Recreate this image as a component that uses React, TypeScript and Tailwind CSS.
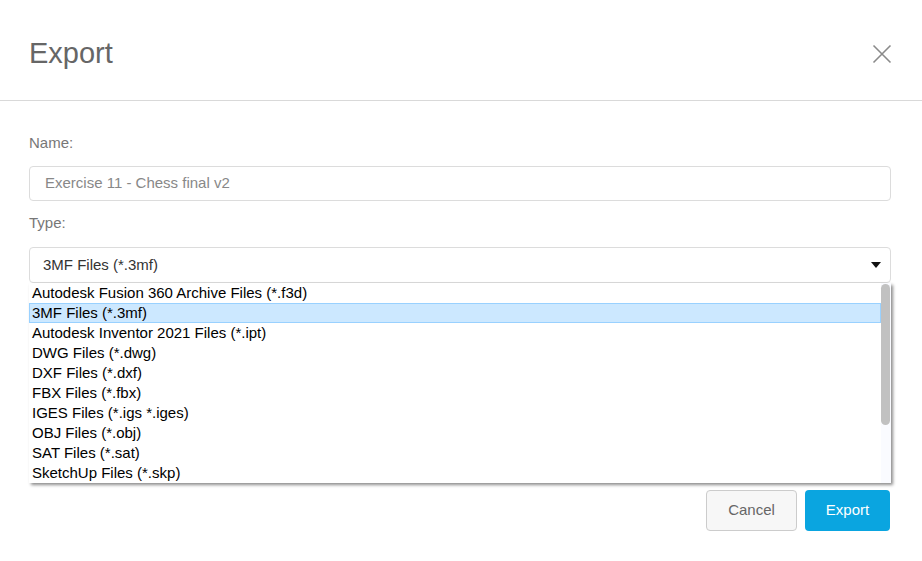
import React from 'react';

const types = [
  'Autodesk Fusion 360 Archive Files (*.f3d)',
  '3MF Files (*.3mf)',
  'Autodesk Inventor 2021 Files (*.ipt)',
  'DWG Files (*.dwg)',
  'DXF Files (*.dxf)',
  'FBX Files (*.fbx)',
  'IGES Files (*.igs *.iges)',
  'OBJ Files (*.obj)',
  'SAT Files (*.sat)',
  'SketchUp Files (*.skp)',
];

export default function App() {
  return (
    <div className="w-[922px] h-[561px] bg-white font-['Liberation_Sans',Arial,sans-serif] overflow-hidden">
      {/* header */}
      <div className="h-[101px] border-b border-[#d9d9d9] flex items-start justify-between pl-[29px] pr-[30px]">
        <h1 className="mt-[35px] text-[29px] leading-[36px] text-[#666666]">Export</h1>
        <button className="mt-[44px] w-[20px] h-[20px] text-[#8a8a8a]" aria-label="Close">
          <svg width="20" height="20" viewBox="0 0 20 20" fill="none" stroke="currentColor" strokeWidth="1.6">
            <path d="M1.5 1.5 L18.5 18.5 M18.5 1.5 L1.5 18.5" />
          </svg>
        </button>
      </div>

      {/* body */}
      <div className="pl-[29px] pr-[31px] pt-[32px]">
        <label className="block text-[15px] leading-[20px] text-[#777777]">Name:</label>
        <div className="mt-[13px] h-[35px] border border-[#dcdcdc] rounded-[4px] flex items-center pl-[15px] text-[15px] text-[#888888]">
          Exercise 11 - Chess final v2
        </div>

        <label className="block mt-[12px] text-[15px] leading-[20px] text-[#777777]">Type:</label>
        <div className="relative mt-[14px]">
          <div className="h-[36px] border border-[#dcdcdc] rounded-[4px] flex items-center justify-between pl-[13px] pr-[9px] text-[15px] text-[#333333]">
            <span>3MF Files (*.3mf)</span>
            <svg width="10" height="6" viewBox="0 0 10 6">
              <path d="M0 0 L10 0 L5 6 Z" fill="#111" />
            </svg>
          </div>

          {/* open dropdown list */}
          <div className="absolute left-0 right-0 top-[36px] h-[200px] bg-white flex shadow-[2px_2px_3px_rgba(0,0,0,0.45)] z-10">
            <ul className="flex-1">
              {types.map((t, i) => (
                <li
                  key={t}
                  className={
                    i === 1
                      ? 'h-[20px] leading-[18px] pl-[2px] text-[15px] text-black bg-[#cce8ff] border border-[#99d1ff]'
                      : 'h-[20px] leading-[20px] pl-[3px] text-[15px] text-black'
                  }
                >
                  {t}
                </li>
              ))}
            </ul>
            <div className="w-[10px] bg-[#fafbff] pt-[1px]">
              <div className="h-[141px] w-[9px] rounded-[5px] bg-[#c1c1c1]" />
            </div>
          </div>
        </div>

        {/* actions */}
        <div className="mt-[207px] flex justify-end gap-[8px] pr-[1px]">
          <button className="w-[91px] h-[41px] rounded-[4px] border border-[#cccccc] bg-[#f7f7f7] text-[15px] text-[#666666]">
            Cancel
          </button>
          <button className="w-[85px] h-[41px] rounded-[4px] bg-[#0aa5e0] text-[15px] text-white">
            Export
          </button>
        </div>
      </div>
    </div>
  );
}
